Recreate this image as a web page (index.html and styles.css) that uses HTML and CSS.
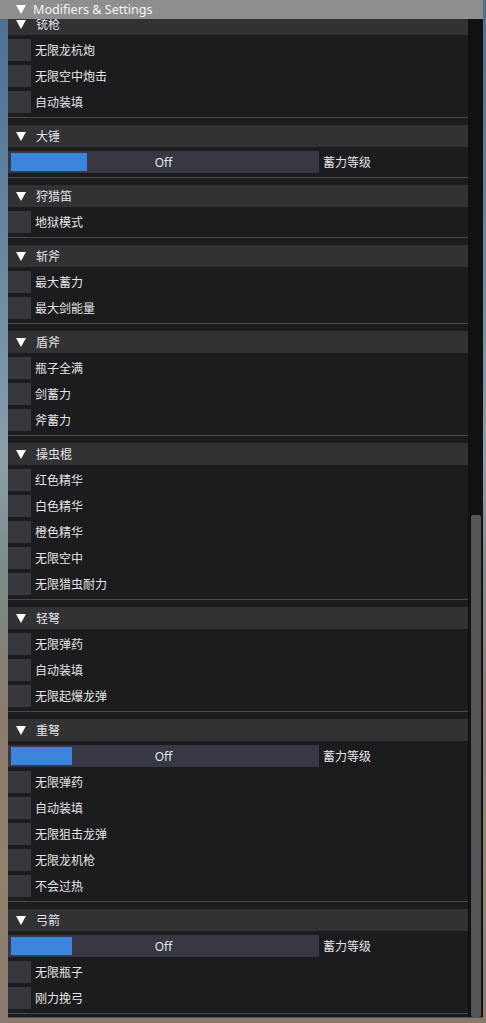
FILE: index.html
```html
<!DOCTYPE html>
<html lang="zh">
<head>
    <meta charset="UTF-8">
    <meta name="viewport" content="width=device-width, initial-scale=1.0">
    <title>Modifiers & Settings</title>
    <link rel="stylesheet" href="styles.css">
</head>
<body>
    <div class="window">
        <div class="title-bar">
            <svg class="arrow" width="10" height="9" viewBox="0 0 10 9"><polygon points="0,0 10,0 5,9" fill="#fff"/></svg>
            <span>Modifiers &amp; Settings</span>
        </div>
        <div class="body">
            <div class="child">
                <div class="scroll">
                    <div class="list">
                        <div class="section">
                            <div class="header"><svg class="arrow" width="10" height="9" viewBox="0 0 10 9"><polygon points="0,0 10,0 5,9" fill="#fff"/></svg><span>铳枪</span></div>
                            <label class="check"><span class="box"></span>无限龙杭炮</label>
                            <label class="check"><span class="box"></span>无限空中炮击</label>
                            <label class="check"><span class="box"></span>自动装填</label>
                        </div>
                        <div class="sep"></div>
                        <div class="section">
                            <div class="header"><svg class="arrow" width="10" height="9" viewBox="0 0 10 9"><polygon points="0,0 10,0 5,9" fill="#fff"/></svg><span>大锤</span></div>
                            <div class="slider-row">
                                <div class="slider"><span class="grab" style="width: 76px"></span><span class="value">Off</span></div>
                                <span class="slider-label">蓄力等级</span>
                            </div>
                        </div>
                        <div class="sep"></div>
                        <div class="section">
                            <div class="header"><svg class="arrow" width="10" height="9" viewBox="0 0 10 9"><polygon points="0,0 10,0 5,9" fill="#fff"/></svg><span>狩猎笛</span></div>
                            <label class="check"><span class="box"></span>地狱模式</label>
                        </div>
                        <div class="sep"></div>
                        <div class="section">
                            <div class="header"><svg class="arrow" width="10" height="9" viewBox="0 0 10 9"><polygon points="0,0 10,0 5,9" fill="#fff"/></svg><span>斩斧</span></div>
                            <label class="check"><span class="box"></span>最大蓄力</label>
                            <label class="check"><span class="box"></span>最大剑能量</label>
                        </div>
                        <div class="sep"></div>
                        <div class="section">
                            <div class="header"><svg class="arrow" width="10" height="9" viewBox="0 0 10 9"><polygon points="0,0 10,0 5,9" fill="#fff"/></svg><span>盾斧</span></div>
                            <label class="check"><span class="box"></span>瓶子全满</label>
                            <label class="check"><span class="box"></span>剑蓄力</label>
                            <label class="check"><span class="box"></span>斧蓄力</label>
                        </div>
                        <div class="sep"></div>
                        <div class="section">
                            <div class="header"><svg class="arrow" width="10" height="9" viewBox="0 0 10 9"><polygon points="0,0 10,0 5,9" fill="#fff"/></svg><span>操虫棍</span></div>
                            <label class="check"><span class="box"></span>红色精华</label>
                            <label class="check"><span class="box"></span>白色精华</label>
                            <label class="check"><span class="box"></span>橙色精华</label>
                            <label class="check"><span class="box"></span>无限空中</label>
                            <label class="check"><span class="box"></span>无限猎虫耐力</label>
                        </div>
                        <div class="sep"></div>
                        <div class="section">
                            <div class="header"><svg class="arrow" width="10" height="9" viewBox="0 0 10 9"><polygon points="0,0 10,0 5,9" fill="#fff"/></svg><span>轻弩</span></div>
                            <label class="check"><span class="box"></span>无限弹药</label>
                            <label class="check"><span class="box"></span>自动装填</label>
                            <label class="check"><span class="box"></span>无限起爆龙弹</label>
                        </div>
                        <div class="sep"></div>
                        <div class="section">
                            <div class="header"><svg class="arrow" width="10" height="9" viewBox="0 0 10 9"><polygon points="0,0 10,0 5,9" fill="#fff"/></svg><span>重弩</span></div>
                            <div class="slider-row">
                                <div class="slider"><span class="grab" style="width: 61px"></span><span class="value">Off</span></div>
                                <span class="slider-label">蓄力等级</span>
                            </div>
                            <label class="check"><span class="box"></span>无限弹药</label>
                            <label class="check"><span class="box"></span>自动装填</label>
                            <label class="check"><span class="box"></span>无限狙击龙弹</label>
                            <label class="check"><span class="box"></span>无限龙机枪</label>
                            <label class="check"><span class="box"></span>不会过热</label>
                        </div>
                        <div class="sep"></div>
                        <div class="section">
                            <div class="header"><svg class="arrow" width="10" height="9" viewBox="0 0 10 9"><polygon points="0,0 10,0 5,9" fill="#fff"/></svg><span>弓箭</span></div>
                            <div class="slider-row">
                                <div class="slider"><span class="grab" style="width: 61px"></span><span class="value">Off</span></div>
                                <span class="slider-label">蓄力等级</span>
                            </div>
                            <label class="check"><span class="box"></span>无限瓶子</label>
                            <label class="check"><span class="box"></span>刚力挽弓</label>
                        </div>
                        <div class="sep"></div>
                    </div>
                </div>
                <div class="scrollbar">
                    <div class="thumb"></div>
                </div>
            </div>
        </div>
    </div>
</body>
</html>
```

FILE: styles.css
```css
body {
    margin: 0;
    padding: 0;
    height: 1023px;
    overflow: hidden;
    font-family: "Noto Sans", "Noto Sans CJK SC", sans-serif;
    font-size: 12px;
    color: #e4e4e4;
    background: linear-gradient(180deg,
        #4a6f92 0%,
        #5a7e9c 15%,
        #6f8fa3 30%,
        #8aa0a8 45%,
        #7c8c8c 55%,
        #8b7a6c 70%,
        #94826f 85%,
        #8a7a6e 100%
    );
}

.window {
    width: 483px;
    display: flex;
    flex-direction: column;
}

.title-bar {
    height: 19px;
    background-color: #8e8e8e;
    display: flex;
    align-items: center;
    padding-left: 16px;
    gap: 7px;
    color: #f4f4f4;
    font-size: 12.6px;
    line-height: 19px;
}

.arrow {
    flex-shrink: 0;
    display: block;
}

.body {
    padding-left: 8px;
}

.child {
    display: flex;
    height: 998px;
    background-color: #1c1c1e;
    border-bottom: 1px solid #55555a;
}

.scroll {
    flex: 1;
    overflow: hidden;
}

.list {
    margin-top: -6px;
    display: flex;
    flex-direction: column;
}

.section {
    display: flex;
    flex-direction: column;
    gap: 4px;
}

.sep {
    height: 1px;
    background-color: #4b4b52;
    margin: 4px 0 7px 0;
}

/* text sits 1px low in each 22px row, as in the game overlay */
.header {
    height: 22px;
    background-color: #323235;
    display: flex;
    align-items: flex-start;
    padding-left: 8px;
    gap: 10px;
    line-height: 24px;
}

.header .arrow {
    align-self: center;
}

.check {
    height: 22px;
    display: flex;
    align-items: flex-start;
    gap: 4px;
    line-height: 24px;
}

.box {
    width: 23px;
    height: 22px;
    background-color: #37373e;
    flex-shrink: 0;
}

.slider-row {
    height: 22px;
    display: flex;
    align-items: flex-start;
    gap: 4px;
}

.slider {
    position: relative;
    width: 311px;
    height: 22px;
    background-color: #383845;
    display: flex;
    align-items: flex-start;
    justify-content: center;
}

.grab {
    position: absolute;
    left: 3px;
    top: 2px;
    height: 18px;
    background-color: #3d84dd;
}

.value {
    position: relative;
    line-height: 24px;
}

.slider-label {
    line-height: 24px;
}

.scrollbar {
    width: 15px;
    background-color: #111112;
    padding: 0 2px 0 3px;
    box-sizing: border-box;
    display: flex;
    flex-direction: column;
    justify-content: flex-end;
}

.thumb {
    height: 502px;
    background-color: #555558;
    border-radius: 2px;
}
```
